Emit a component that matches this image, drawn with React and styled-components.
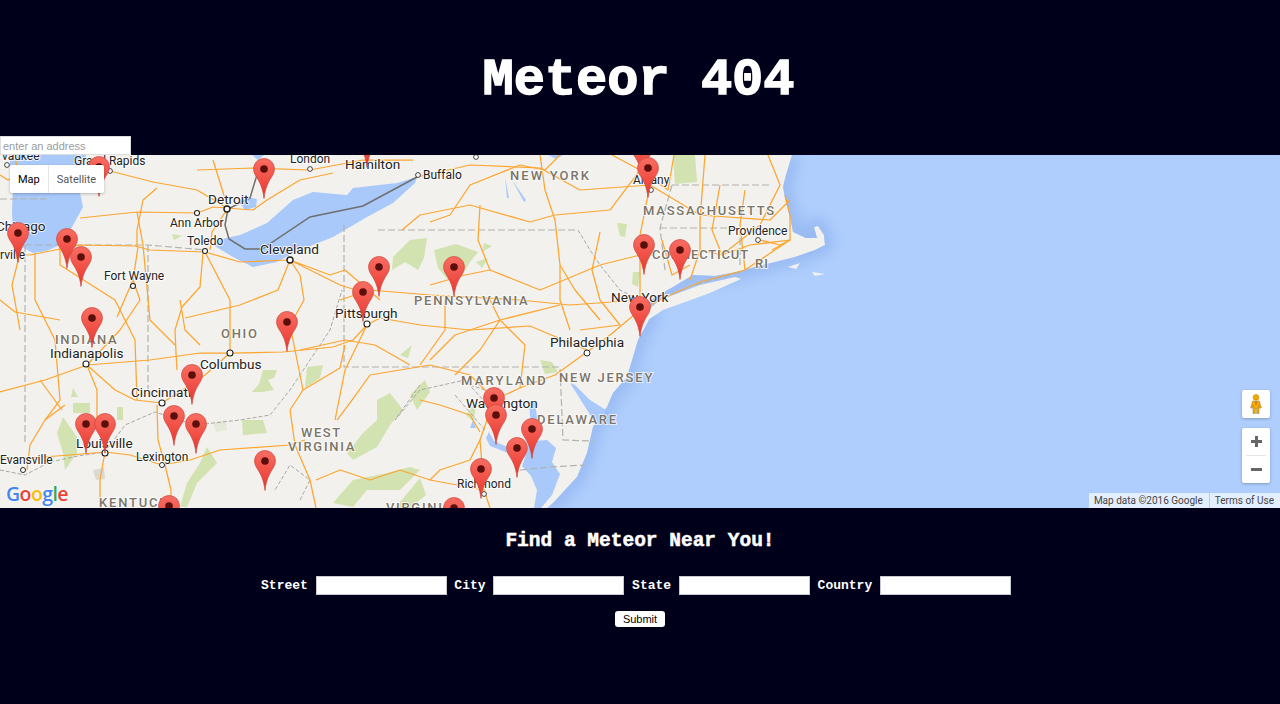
import React from "react";
import styled, { createGlobalStyle } from "styled-components";

const GlobalStyle = createGlobalStyle`
  html, body {
    margin: 0;
    padding: 0;
    background: #00001b;
  }
`;

const lakes = [
  // michigan
  "M10 155 L86 155 L84 178 L80 193 L83 207 L72 227 L60 245 L46 251 L33 253 L22 247 L13 240 L12 210 L13 187 L10 165Z",
  // erie
  "M417 177 L397 183 L353 188 L347 195 L313 192 L293 200 L267 223 L240 235 L217 240 L213 245 L233 257 L253 267 L277 262 L293 253 L333 237 L367 217 L393 203 L415 183Z",
  // st clair + huron + ontario
  "M240 203 L246 197 L257 199 L256 207 L245 210Z",
  "M252 155 L264 155 L258 160Z",
  "M548 155 L563 155 L556 159Z",
  // finger lakes
  "M505 177 L509 198 L507 198Z",
  "M512 180 L526 200 L524 202Z",
  // delaware bay
  "M570 383 L575 385 L590 400 L606 410 L596 426 L592 418 L582 402Z",
  // chesapeake
  "M529 402 L535 402 L538 425 L533 441 L547 440 L556 448 L552 462 L560 474 L552 495 L541 508 L534 508 L537 490 L531 476 L522 466 L527 452 L531 428Z",
  // potomac
  "M489 432 L494 441 L505 446 L518 450 L516 456 L503 451 L490 446 L486 438Z",
  "M473 420 L476 428 L470 428Z",
];

const coast =
  "M792 155 L786 175 L783 187 L786 203 L790 217 L793 232 L806 238 L817 238 L814 227 L818 226 L824 235 L825 245 L815 250 L795 257 L775 262 L755 267 L737 272 L715 276 L693 275 L673 287 L655 297 L646 305 L650 318 L638 340 L633 357 L627 377 L613 393 L607 407 L593 427 L587 453 L577 477 L553 503 L547 508";
const ocean = `${coast} L1280 508 L1280 155Z`;

const islands = [
  "M645 322 L663 310 L710 293 L723 287 L741 279 L735 277 L700 285 L660 300 L648 310Z",
  "M788 267 L800 263 L796 269Z",
  "M812 272 L825 274 L815 276Z",
];

const parks = [
  // pennsylvania
  "M393 257 L410 240 L427 238 L424 258 L418 270 L405 262 L392 270Z",
  "M434 250 L456 244 L478 252 L470 262 L462 276 L448 280 L438 268Z",
  "M476 262 L488 258 L482 268Z",
  "M484 243 L492 246 L482 252Z",
  "M617 223 L627 224 L625 237 L620 236Z",
  "M673 155 L695 155 L697 182 L675 184Z",
  "M633 272 L640 272 L638 287 L632 284Z",
  "M466 415 L476 402 L474 422Z",
  "M540 360 L552 362 L558 372 L545 374Z",
  // ohio
  "M263 370 L277 370 L274 378 L268 380 L274 390 L262 392 L252 392 L259 384Z",
  "M307 367 L323 365 L320 378 L305 388Z",
  "M242 420 L263 420 L267 433 L243 435Z",
  // west virginia ridges
  "M377 400 L390 393 L403 410 L390 425 L377 447 L353 460 L347 453 L363 433 L377 420Z",
  "M333 503 L353 480 L387 473 L410 467 L420 470 L400 490 L367 490 L353 507Z",
  "M395 508 L420 478 L426 495 L410 508Z",
  "M410 395 L425 380 L430 392 L417 410Z",
  // kentucky
  "M207 447 L217 463 L197 483 L187 507 L180 507 L187 483 L200 463Z",
  // indiana
  "M63 417 L77 437 L77 453 L65 470 L63 453 L57 433Z",
  "M73 403 L90 403 L90 413 L73 413Z",
  "M73 388 L78 397 L71 397Z",
  "M117 407 L123 407 L123 420 L117 420Z",
  "M172 234 L182 236 L174 240Z",
  "M400 355 L412 345 L408 358Z",
];

const roads = [
  "M0 253 L30 255 L80 245 L135 246 L150 250 L205 252 L240 262 L290 260",
  "M110 171 L153 182 L197 190 L227 208",
  "M80 218 L137 212 L197 213 L213 207 L253 210",
  "M197 170 L253 168 L310 170 L363 160 L413 160",
  "M253 210 L267 200 L300 180 L333 173",
  "M138 247 L133 280 L117 317 M137 247 L137 230 L143 200 L157 188",
  "M203 253 L200 287 L182 307 L175 330 L176 353 L177 370",
  "M87 365 L150 360 L200 353 L230 353 L283 352 L333 347 L353 340 L367 325",
  "M367 325 L380 318 L420 325 L470 330 L530 326 L587 350",
  "M340 300 L370 290 L430 295 L520 300 L570 305 L640 300",
  "M290 260 L300 275 L304 300 L290 325 L295 350 L303 390 L290 410 L295 445 L310 480 L316 508",
  "M290 260 L340 285 L372 295 M290 260 L330 275 L345 270 L380 300",
  "M87 365 L115 390 L135 400 L162 403 M87 365 L97 390 L97 420 L105 452 M87 365 L45 380 L0 392",
  "M230 353 L205 375 L162 403 M87 365 L120 330 L140 300 L133 280",
  "M105 452 L130 455 L162 465 L190 460 L220 450 L290 445 L305 440",
  "M0 458 L30 458 L70 455 L105 452 M157 405 L158 440 L165 465 L171 490 L171 508",
  "M105 452 L100 480 L100 508 M27 470 L30 445 L45 420 L65 405",
  "M316 480 L340 470 L370 480 L400 470 L430 480 L484 490",
  "M337 420 L352 400 L370 375 L430 365 L470 375 L490 395",
  "M494 400 L480 440 L484 490 L490 508 M494 400 L520 388 L555 375 L587 352 L610 335 L640 310",
  "M430 222 L450 215 L470 185 L520 165 L545 170 L560 155",
  "M417 177 L470 165 L540 168 L580 190 L650 185",
  "M650 185 L640 235 L640 310 M540 155 L545 190 L555 220 L560 265 L560 300 L570 330",
  "M640 310 L670 295 L700 282 L745 270 L790 240 L790 215 L785 195",
  "M650 185 L700 215 L770 220 L790 200",
  "M690 280 L700 250 L700 220 L705 155 M760 240 L780 245 L790 240 L772 250",
  "M722 255 L760 225 L780 185 L768 155 M640 155 L650 185",
  "M430 285 L465 275 L490 270 L540 290 L600 265 L640 255 M560 265 L575 290 L600 320",
  "M430 360 L455 335 L500 320 L560 305 M520 388 L525 345 L510 330 L500 320",
  "M402 230 L420 215 L470 205 L530 222 L555 215",
  "M700 250 L722 255 L750 245 L790 240",
  "M430 480 L440 470 L470 460 L480 440 M420 400 L440 405 L470 415 L480 432",
  "M15 155 L18 175 L8 180 L0 175 M85 193 L70 170 L95 165 M20 253 L12 285 L20 330",
  "M0 300 L15 312 L60 320 M40 380 L62 410 M200 345 L185 330 L180 300",
  "M35 253 L35 300 L55 340 L60 400 L45 420 M60 245 L60 265 L115 300 L135 340 L137 400",
  "M137 212 L143 245 L150 320 L175 345 M205 252 L230 300 L230 353",
  "M228 208 L212 232 L210 250 M228 208 L213 160 M290 260 L278 290 L240 305 L185 318",
  "M300 350 L345 340 L375 345 L410 365 M303 390 L340 368 L345 345 M367 325 L345 370 L335 420",
  "M445 300 L445 330 L420 365 M490 300 L500 320 L480 350 L455 375 M480 205 L478 240 L490 270",
  "M555 215 L610 210 L640 170 M600 232 L592 270 L600 300 L620 325 M620 325 L580 330",
  "M662 240 L672 275 L690 265 M720 185 L712 230 L722 255 M745 190 L740 225 L745 270",
  "M612 155 L640 170 L668 190 L674 155",
];

const borders = [
  "M0 199 L47 199",
  "M25 245 L148 245 L205 250",
  "M25 245 L25 445",
  "M148 245 L148 390",
  "M344 225 L344 367 L560 367 L563 440 L593 441",
  "M378 230 L578 230",
  "M672 185 L770 185",
  "M660 228 L740 228 L740 265",
  "M672 185 L660 228 L665 270",
  "M520 470 L550 467 L585 465",
  "M695 285 L740 272",
];

const wiggles = [
  "M0 470 L25 475 L50 462 L78 456 L105 452 L125 425 L155 412 L195 425 L240 420 L270 415 L290 390 L330 330 L342 290",
  "M578 230 L590 250 L600 265 L620 290 L640 300",
  "M300 500 L310 480 L290 465 L275 490",
  "M420 385 L395 420 L420 390 L465 380 L485 402",
  "M455 395 L485 430 M470 385 L500 395",
];

// name, x, baseline, major city
const cityLabels = [
  ["vaukee", 2, 160, false],
  ["Grand Rapids", 74, 165, false],
  ["London", 290, 163, false],
  ["Detroit", 208, 204, true],
  ["Ann Arbor", 170, 227, false],
  ["Toledo", 187, 245, false],
  ["Cleveland", 260, 254, true],
  ["Fort Wayne", 104, 280, false],
  ["Chicago", -4, 231, true],
  ["rville", 0, 259, false],
  ["Indianapolis", 50, 358, true],
  ["Columbus", 200, 369, true],
  ["Cincinnati", 131, 397, true],
  ["Lexington", 136, 461, false],
  ["Louisville", 76, 448, true],
  ["Evansville", 0, 464, false],
  ["Pittsburgh", 335, 318, true],
  ["Philadelphia", 550, 347, true],
  ["New York", 611, 302, true],
  ["Washington", 466, 408, true],
  ["Richmond", 457, 488, false],
  ["Providence", 728, 235, false],
  ["Albany", 633, 184, false],
  ["Hamilton", 345, 169, true],
  ["Buffalo", 423, 179, false],
];

const stateLabels = [
  ["NEW YORK", 510, 180, 2.1],
  ["MASSACHUSETTS", 643, 215, 1.8],
  ["PENNSYLVANIA", 414, 305, 1.8],
  ["CONNECTICUT", 652, 259, 0.8],
  ["RI", 755, 268, 1],
  ["OHIO", 221, 338, 1.7],
  ["INDIANA", 55, 344, 1.65],
  ["MARYLAND", 461, 385, 2.2],
  ["NEW JERSEY", 559, 382, 1.8],
  ["DELAWARE", 537, 424, 1.8],
  ["WEST", 301, 437, 1.5],
  ["VIRGINIA", 288, 451, 1.7],
  ["KENTUCKY", 99, 507, 1.8],
  ["VIRGINIA", 386, 512, 1.7],
];

const cityDots = [
  [227, 209, 3, 2], [197, 213, 2.5, 1.5], [205, 251, 2.5, 1.5], [290, 260, 3, 2],
  [133, 286, 2.5, 1.5], [367, 324, 3, 1.6], [230, 353, 3, 1.6], [86, 364, 3, 1.6],
  [162, 403, 3, 1.6], [105, 453, 3, 1.6], [162, 465, 2.5, 1.4], [23, 470, 2.5, 1.4],
  [587, 353, 3, 1.4], [484, 494, 2.4, 1.2], [758, 240, 2.4, 1.2], [651, 190, 2.4, 1.2],
  [476, 157, 2.4, 1.2], [418, 175, 2.4, 1.2], [310, 169, 2.4, 1.2], [110, 171, 2.4, 1.2], [7, 165, 2.4, 1.2],
];

const pins = [
  [99, 167], [367, 138], [264, 169], [18, 233], [67, 239], [81, 257], [363, 292], [379, 267],
  [92, 318], [287, 322], [192, 375], [86, 424], [105, 424], [174, 416], [196, 424], [265, 461],
  [169, 506], [642, 148], [648, 168], [644, 245], [680, 250], [454, 267], [640, 307], [494, 398],
  [496, 415], [532, 429], [517, 448], [481, 469], [454, 508],
];

const Meteor404 = () => (
  <Page>
    <GlobalStyle />
    <Header>
      <Title>Meteor 404</Title>
    </Header>
    <AddressInput placeholder="enter an address" />
    <MapFrame>
      <MapCanvas viewBox="0 155 1280 353">
        <defs>
          <filter id="coast" x="-10%" y="-10%" width="120%" height="120%">
            <feGaussianBlur stdDeviation="7" />
          </filter>
          <clipPath id="sea">
            <path d={ocean} />
          </clipPath>
          <linearGradient id="pinFill" x1="0" y1="0" x2="0" y2="1">
            <stop offset="0" stopColor="#f96d62" />
            <stop offset="1" stopColor="#e8352c" />
          </linearGradient>
        </defs>
        <rect x="0" y="155" width="1280" height="353" fill="#f2f1ed" />
        <path d={ocean} fill="#afcefd" />
        <g clipPath="url(#sea)">
          <path d={coast} fill="none" stroke="#98baf2" strokeWidth="16" filter="url(#coast)" />
        </g>
        {islands.map((d) => (
          <path key={d} d={d} fill="#f2f1ed" />
        ))}
        {lakes.map((d) => (
          <path key={d} d={d} fill="#a9c9fb" />
        ))}
        {parks.map((d) => (
          <path key={d} d={d} fill="#d2e2b0" />
        ))}
        <path d="M213 423 L226 420 L227 430 L216 432Z" fill="#e4e9d9" />
        <path d="M93 470 L104 468 L105 479 L96 480Z" fill="#dcd9d0" />
        {wiggles.map((d) => (
          <path key={d} d={d} fill="none" stroke="#a9a9a5" strokeWidth="1" strokeDasharray="4 2" />
        ))}
        {borders.map((d) => (
          <path key={d} d={d} fill="none" stroke="#b2b2ae" strokeWidth="1.2" strokeDasharray="7 3" />
        ))}
        {roads.map((d) => (
          <path key={d} d={d} fill="none" stroke="#fda52f" strokeWidth="1.25" strokeLinejoin="round" />
        ))}
        <path
          d="M417 177 L363 206 L310 217 L262 249 L245 249 L229 239 L225 225 L228 209 L250 198 L256 178 L263 160"
          fill="none"
          stroke="#6f6f6f"
          strokeWidth="1.5"
        />
        {cityDots.map(([x, y, r, w]) => (
          <circle key={`${x}-${y}`} cx={x} cy={y} r={r} fill="#fff" stroke="#222" strokeWidth={w * 0.7} />
        ))}
        {stateLabels.map(([name, x, y, spacing]) => (
          <StateLabel key={`${name}-${x}`} x={x} y={y} letterSpacing={spacing}>
            {name}
          </StateLabel>
        ))}
        {cityLabels.map(([name, x, y, major]) => (
          <CityLabel key={name} x={x} y={y} $major={major}>
            {name}
          </CityLabel>
        ))}
      </MapCanvas>

      {pins.map(([x, y]) => (
        <Pin key={`${x}-${y}`} $x={x} $y={y - 155} viewBox="0 0 22 41">
          <path
            d="M11 .6C5.2.6.6 5.2.6 11c0 3.3 1.3 5.6 3 8.3 3 4.6 6.2 10.6 7.4 21.1 1.2-10.5 4.4-16.5 7.4-21.1 1.7-2.7 3-5 3-8.3C21.4 5.2 16.8.6 11 .6Z"
            fill="url(#pinFill)"
            stroke="#c9463e"
            strokeWidth=".7"
          />
          <circle cx="11" cy="11" r="3.8" fill="#5a0f0b" />
        </Pin>
      ))}

      <MapTypes>
        <MapType $active>Map</MapType>
        <MapType>Satellite</MapType>
      </MapTypes>

      <GoogleLogo>
        <span>G</span>
        <span>o</span>
        <span>o</span>
        <span>g</span>
        <span>l</span>
        <span>e</span>
      </GoogleLogo>

      <Pegman>
        <svg width="14" height="21" viewBox="0 0 14 21">
          <circle cx="7" cy="3.4" r="2.9" fill="#f2a900" stroke="#b98200" strokeWidth=".5" />
          <path
            d="M3.6 7h6.8l2 6.8-1.5.5-.9-2.6v7.8H7.6v-5H6.4v5H4V11.7l-.9 2.6-1.5-.5Z"
            fill="#f2a900"
            stroke="#8f7f4f"
            strokeWidth=".5"
          />
          <path d="M7 7l1 2-1 2.5L6 9Z" fill="#dd6f17" />
        </svg>
      </Pegman>

      <ZoomBox>
        <ZoomButton>
          <svg width="11" height="11" viewBox="0 0 11 11">
            <path d="M4 0h3v4h4v3H7v4H4V7H0V4h4Z" fill="#666" />
          </svg>
        </ZoomButton>
        <ZoomRule />
        <ZoomButton>
          <svg width="11" height="11" viewBox="0 0 11 11">
            <path d="M0 4h11v3H0Z" fill="#666" />
          </svg>
        </ZoomButton>
      </ZoomBox>

      <Attribution>
        <AttributionCell>Map data ©2016 Google</AttributionCell>
        <AttributionCell>Terms of Use</AttributionCell>
      </Attribution>
    </MapFrame>

    <Finder>
      <FinderTitle>Find a Meteor Near You!</FinderTitle>
      <AddressForm>
        <FieldRow>
          <FieldLabel>Street</FieldLabel>
          <FieldInput />
          <FieldLabel>City</FieldLabel>
          <FieldInput />
          <FieldLabel>State</FieldLabel>
          <FieldInput />
          <FieldLabel>Country</FieldLabel>
          <FieldInput />
        </FieldRow>
        <SubmitButton type="button">Submit</SubmitButton>
      </AddressForm>
    </Finder>
  </Page>
);

const Page = styled.div`
  width: 1280px;
  height: 704px;
  overflow: hidden;
  background: #00001b;
  color: #fff;
`;

const Header = styled.header`
  height: 136px;
  display: flex;
  justify-content: center;
  padding-top: 51px;
  box-sizing: border-box;
`;

const Title = styled.h1`
  margin: 0 3px 0 0;
  font: bold 52px/60px "Liberation Mono", "Courier New", monospace;
  -webkit-text-stroke: 1.4px #fff;
`;

const AddressInput = styled.input`
  display: block;
  width: 131px;
  height: 19px;
  box-sizing: border-box;
  margin: 0;
  padding: 1px 2px;
  border: 1px solid #ddd;
  background: #fff;
  font: 11px "Liberation Sans", Arial, sans-serif;

  &::placeholder {
    color: #9c9c9c;
    opacity: 1;
  }
`;

const MapFrame = styled.div`
  position: relative;
  height: 353px;
  overflow: hidden;
`;

const MapCanvas = styled.svg`
  display: block;
  width: 1280px;
  height: 353px;
`;

const CityLabel = styled.text`
  font: ${(p) => (p.$major ? "13.6px" : "12px")} Roboto, "Liberation Sans", sans-serif;
  fill: #222;
  stroke: #fff;
  stroke-width: 2px;
  stroke-opacity: 0.75;
  paint-order: stroke;
`;

const StateLabel = styled.text`
  font: 500 13px Roboto, "Liberation Sans", sans-serif;
  fill: #7b7569;
  stroke: #fff;
  stroke-width: 2px;
  stroke-opacity: 0.7;
  paint-order: stroke;
`;

const Pin = styled.svg`
  position: absolute;
  left: ${(p) => p.$x - 11}px;
  top: ${(p) => p.$y - 11}px;
  width: 22px;
  height: 41px;
`;

const MapTypes = styled.div`
  position: absolute;
  left: 10px;
  top: 10px;
  display: flex;
  height: 28px;
  background: #fff;
  border-radius: 2px;
  box-shadow: 0 1px 3px rgba(0, 0, 0, 0.25);
`;

const MapType = styled.div`
  display: flex;
  align-items: center;
  padding: 0 8px;
  font: 11px Roboto, "Liberation Sans", sans-serif;
  color: ${(p) => (p.$active ? "#000" : "#565656")};
  ${(p) => p.$active && "border-right: 1px solid #e6e6e6;"}
`;

const GoogleLogo = styled.div`
  position: absolute;
  left: 6px;
  bottom: 1px;
  font: 600 19.5px/26px "Open Sans", Roboto, sans-serif;
  letter-spacing: -0.6px;
  text-shadow: 0 0 2px #fff;

  span:nth-child(1), span:nth-child(4) {
    color: #4285f4;
  }
  span:nth-child(2), span:nth-child(6) {
    color: #ea4335;
  }
  span:nth-child(3) {
    color: #fbbc05;
  }
  span:nth-child(5) {
    color: #34a853;
  }
`;

const Pegman = styled.div`
  position: absolute;
  right: 10px;
  top: 235px;
  width: 28px;
  height: 28px;
  display: flex;
  align-items: center;
  justify-content: center;
  background: #fff;
  border-radius: 2px;
  box-shadow: 0 1px 3px rgba(0, 0, 0, 0.25);
`;

const ZoomBox = styled.div`
  position: absolute;
  right: 10px;
  top: 273px;
  width: 28px;
  height: 55px;
  display: flex;
  flex-direction: column;
  background: #fff;
  border-radius: 2px;
  box-shadow: 0 1px 3px rgba(0, 0, 0, 0.25);
`;

const ZoomButton = styled.div`
  flex: 1;
  display: flex;
  align-items: center;
  justify-content: center;
`;

const ZoomRule = styled.div`
  height: 1px;
  margin: 0 4px;
  background: #e6e6e6;
`;

const Attribution = styled.div`
  position: absolute;
  right: 0;
  bottom: 0;
  height: 15px;
  display: flex;
  gap: 1px;
`;

const AttributionCell = styled.div`
  display: flex;
  align-items: center;
  padding: 0 6px 0 5px;
  background: rgba(255, 255, 255, 0.65);
  font: 10px Roboto, "Liberation Sans", sans-serif;
  color: #444;
`;

const Finder = styled.section`
  display: flex;
  flex-direction: column;
  align-items: center;
`;

const FinderTitle = styled.h2`
  margin: 22px 0 0;
  font: bold 19.5px/22px "Liberation Mono", "Courier New", monospace;
  -webkit-text-stroke: 0.5px #fff;
`;

const AddressForm = styled.form`
  margin-top: 24px;
  display: flex;
  flex-direction: column;
  align-items: center;
`;

const FieldRow = styled.div`
  display: flex;
  align-items: center;
  gap: 7.75px;
  margin-right: 8px;
`;

const FieldLabel = styled.label`
  font: bold 13px/19px "Liberation Mono", "Courier New", monospace;
`;

const FieldInput = styled.input`
  width: 131px;
  height: 19px;
  box-sizing: border-box;
  margin: 0;
  padding: 0 2px;
  border: 1px solid #c8c8d0;
  background: #fff;
`;

const SubmitButton = styled.button`
  margin-top: 16px;
  width: 50px;
  height: 16px;
  padding: 0;
  border: none;
  border-radius: 3px;
  background: #fff;
  color: #000;
  font: 11px "Liberation Sans", Arial, sans-serif;
`;

export default Meteor404;
